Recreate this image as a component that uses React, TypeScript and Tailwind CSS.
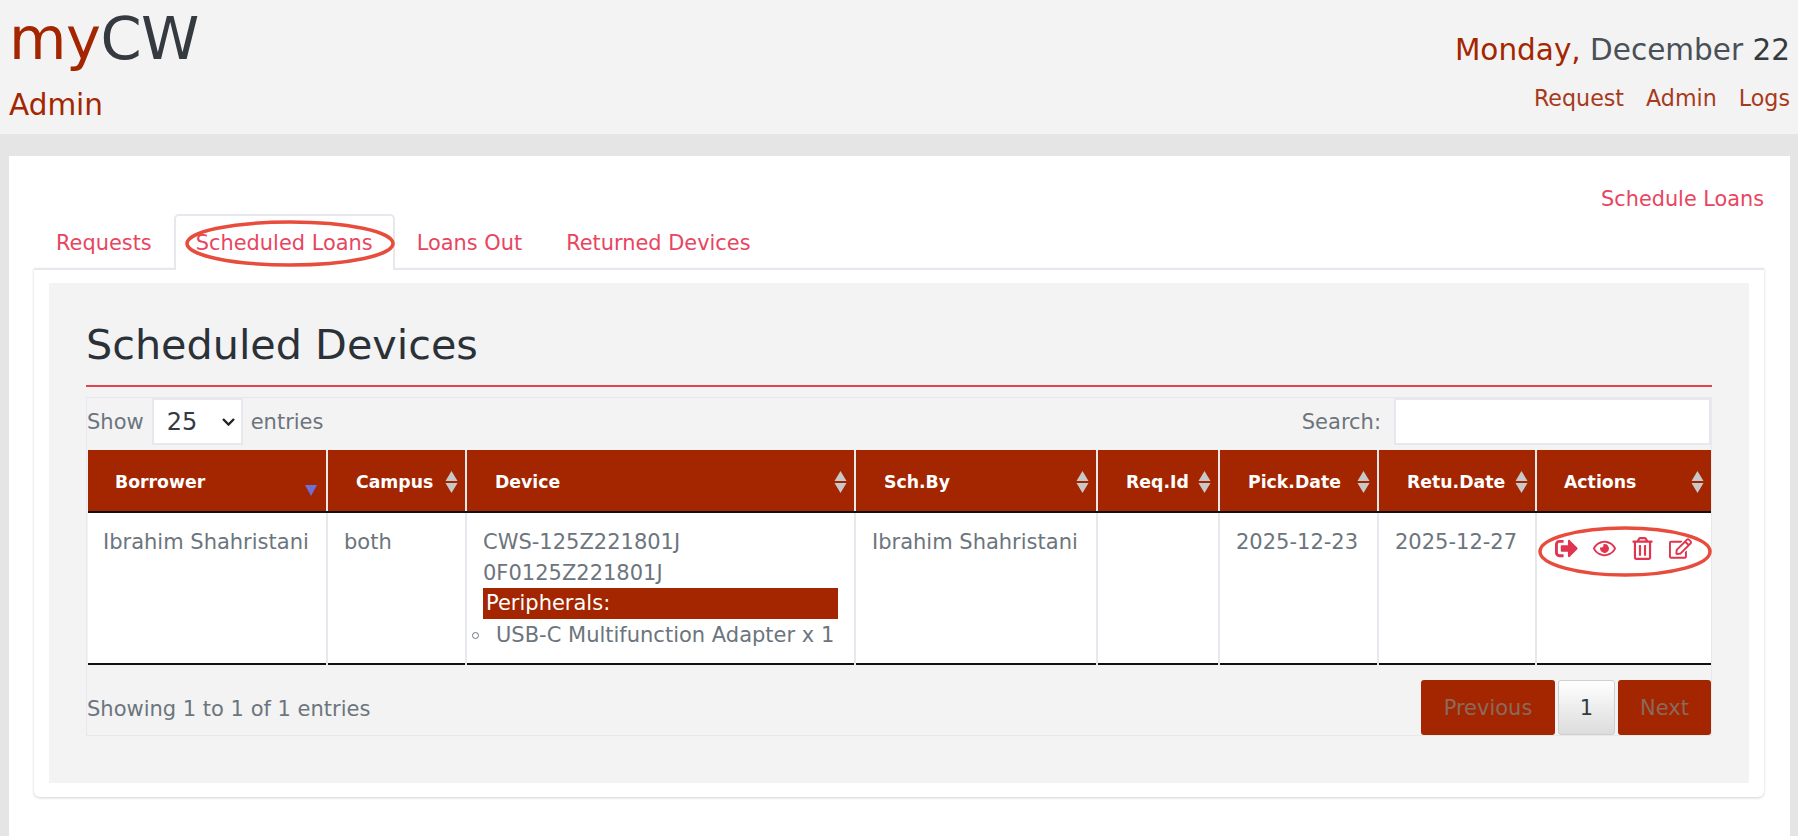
import { FaRegEdit, FaRegEye, FaRegTrashAlt, FaSignOutAlt } from "react-icons/fa"

const columns = [
  { label: "Borrower", width: "w-[239px]", pad: "pl-[27px]", active: true },
  { label: "Campus", width: "w-[139px]", pad: "pl-[28px]" },
  { label: "Device", width: "w-[389px]", pad: "pl-[28px]" },
  { label: "Sch.By", width: "w-[242px]", pad: "pl-[28px]" },
  { label: "Req.Id", width: "w-[122px]", pad: "pl-[28px]" },
  { label: "Pick.Date", width: "w-[159px]", pad: "pl-[28px]" },
  { label: "Retu.Date", width: "w-[158px]", pad: "pl-[28px]" },
  { label: "Actions", width: "w-[175px]", pad: "pl-[27px]" },
]

const SortArrows = ({ active }: { active?: boolean }) => {
  if (active) {
    return (
      <svg className="absolute right-[9px] top-[31px]" width="12" height="16" viewBox="0 0 12 16">
        <path d="M0 4h12L6 15z" fill="#6f6fd8" />
      </svg>
    )
  }
  return (
    <svg className="absolute right-[7px] top-[20px]" width="13" height="24" viewBox="0 0 13 24">
      <path d="M6.5 1L12.5 11H.5z" fill="#c8c8c8" />
      <path d="M.5 13h12L6.5 23z" fill="#c8c8c8" />
    </svg>
  )
}

const Tab = ({ label, active }: { label: string; active?: boolean }) => (
  <a
    className={`block text-[20.9px] leading-[24px] text-[#e8455f] ${
      active
        ? "-mb-[2px] h-[56px] rounded-t-[5px] border-2 border-b-0 border-[#e6e8ee] bg-white px-[20px] pt-[15px]"
        : "h-[54px] px-[22px] pt-[17px]"
    }`}
  >
    {label}
  </a>
)

export default function App() {
  return (
    <div className="min-h-screen overflow-hidden bg-[#e5e5e5] font-['DejaVu_Sans','Liberation_Sans',sans-serif] text-[21px] text-[#6c757d]">
      <header className="flex h-[134px] justify-between bg-[#f3f3f3] pl-[9px] pr-[8px]">
        <div>
          <div className="pt-[4px] text-[59px] leading-[70px] tracking-[-0.5px] text-[#343a40]">
            <span className="text-[#a42600]">my</span>CW
          </div>
          <div className="pt-[15px] text-[29.5px] leading-[32px] text-[#a42600]">Admin</div>
        </div>
        <div className="pt-[32px] text-right">
          <div className="text-[29.5px] leading-[36px] text-[#495057]">
            <span className="text-[#a42600]">Monday,</span> December <span className="text-[#343a40]">22</span>
          </div>
          <nav className="mt-[17px] flex justify-end gap-[22px] text-[22.2px] leading-[26px] text-[#a83a1c]">
            <a>Request</a>
            <a>Admin</a>
            <a>Logs</a>
          </nav>
        </div>
      </header>

      <main className="relative ml-[9px] mr-[8px] mt-[22px] h-[680px] bg-white pl-[25px] pr-[26px] pt-[31px]">
        <div className="text-right">
          <a className="block text-[20.8px] leading-[24px] text-[#e8455f]">Schedule Loans</a>
        </div>
        <div className="mt-[3px] flex h-[54px] items-start">
          <Tab label="Requests" />
          <Tab label="Scheduled Loans" active />
          <Tab label="Loans Out" />
          <Tab label="Returned Devices" />
        </div>

        <section className="h-[529px] rounded-b-[6px] border-t-2 border-[#e6e8ee] bg-white px-[15px] pb-[14px] pt-[13px] shadow-[0_1px_3px_rgba(0,0,0,0.18)]">
          <div className="h-[500px] bg-[#f3f3f3] px-[37px]">
            <h1 className="border-b-2 border-[#e0444f] pb-[13px] pt-[35px] text-[41.3px] font-normal leading-[54px] text-[#2b3138]">
              Scheduled Devices
            </h1>
            <div className="mt-[10px] border border-b-0 border-[#e6e8ee] pr-0">
              <div className="flex h-[52px] items-start justify-between">
                <label className="flex h-[47px] items-center">
                  <span className="pt-[3px]">Show</span>
                  <span className="mx-[8px] flex h-[47px] w-[91px] items-center justify-between border-2 border-[#e6e8ee] bg-white pl-[13px] pr-[6px] text-[24px] text-[#343a40]">
                    25
                    <svg width="13" height="8" viewBox="0 0 13 8">
                      <path d="M1 1l5.5 5.5L12 1" fill="none" stroke="#222" strokeWidth="2.4" />
                    </svg>
                  </span>
                  <span className="pt-[3px]">entries</span>
                </label>
                <label className="flex h-[47px] items-center">
                  <span className="pt-[3px]">Search:</span>
                  <span className="ml-[13px] block h-[47px] w-[317px] border-2 border-[#e6e8ee] bg-white" />
                </label>
              </div>

              <table className="ml-[1px] w-[1623px] table-fixed border-collapse">
                <thead>
                  <tr className="h-[62px] bg-[#a42600] text-white">
                    {columns.map((col) => (
                      <th
                        key={col.label}
                        className={`relative border-x-2 border-b-2 border-x-[#e6e8ee] border-b-[#111] pt-[4px] text-left text-[17.3px] font-bold first:border-l-0 last:border-r-0 ${col.width} ${col.pad}`}
                      >
                        {col.label}
                        <SortArrows active={col.active} />
                      </th>
                    ))}
                  </tr>
                </thead>
                <tbody>
                  <tr className="h-[152px] border-b-2 border-[#111] bg-white align-top">
                    <td className="border-x-2 border-[#e6e8ee] pl-[15px] pt-[17px] leading-[24px] first:border-l-0">
                      Ibrahim Shahristani
                    </td>
                    <td className="border-x-2 border-[#e6e8ee] pl-[16px] pt-[17px] leading-[24px]">both</td>
                    <td className="border-x-2 border-[#e6e8ee] pl-[16px] pr-[16px] pt-[17px] leading-[31px]">
                      <div className="leading-[24px]">CWS-125Z221801J</div>
                      <div className="mt-[7px] leading-[24px]">0F0125Z221801J</div>
                      <div className="mt-[3px] h-[31px] bg-[#a42600] pl-[3px] leading-[31px] text-white">Peripherals:</div>
                      <ul className="pt-[2px] leading-[29px]">
                        <li className="-ml-[11px] flex items-center gap-[17px] whitespace-nowrap">
                          <span className="h-[7px] w-[7px] shrink-0 rounded-full border border-[#6c757d]" />
                          USB-C Multifunction Adapter x 1
                        </li>
                      </ul>
                    </td>
                    <td className="border-x-2 border-[#e6e8ee] pl-[16px] pt-[17px] leading-[24px]">Ibrahim Shahristani</td>
                    <td className="border-x-2 border-[#e6e8ee]" />
                    <td className="border-x-2 border-[#e6e8ee] pl-[16px] pt-[17px] leading-[24px]">2025-12-23</td>
                    <td className="border-x-2 border-[#e6e8ee] pl-[16px] pt-[17px] leading-[24px]">2025-12-27</td>
                    <td className="border-x-2 border-[#e6e8ee] pl-[18px] pt-[24px] last:border-r-0">
                      <div className="flex items-center gap-[15px] text-[23px] text-[#e0344f]">
                        <FaSignOutAlt />
                        <FaRegEye />
                        <FaRegTrashAlt />
                        <FaRegEdit />
                      </div>
                    </td>
                  </tr>
                </tbody>
              </table>

              <div className="flex h-[71px] items-end justify-between border-b border-[#e6e8ee]">
                <div className="pb-[10px]">Showing 1 to 1 of 1 entries</div>
                <div className="flex gap-[3px]">
                  <a className="flex h-[55px] w-[134px] items-center justify-center rounded-[3px] bg-[#a42600] pt-[2px] text-[#8a6a5c]">Previous</a>
                  <a className="flex h-[55px] w-[57px] items-center justify-center rounded-[3px] border border-[#cfcfcf] bg-gradient-to-b from-white to-[#dcdcdc] pt-[2px] text-[#343a40]">1</a>
                  <a className="flex h-[55px] w-[93px] items-center justify-center rounded-[3px] bg-[#a42600] pt-[2px] text-[#8a6a5c]">Next</a>
                </div>
              </div>
            </div>
          </div>
        </section>

        {/* hand drawn marks from the original screenshot */}
        <svg className="absolute left-[176px] top-[64px]" width="210" height="47" viewBox="0 0 210 47">
          <ellipse cx="105" cy="23.5" rx="103" ry="21.5" fill="none" stroke="#e74c3c" strokeWidth="3.5" />
        </svg>
        <svg className="absolute left-[1529px] top-[370px]" width="174" height="51" viewBox="0 0 174 51">
          <ellipse cx="87" cy="25.5" rx="85" ry="23.5" fill="none" stroke="#e74c3c" strokeWidth="3.5" />
        </svg>
      </main>
    </div>
  )
}
